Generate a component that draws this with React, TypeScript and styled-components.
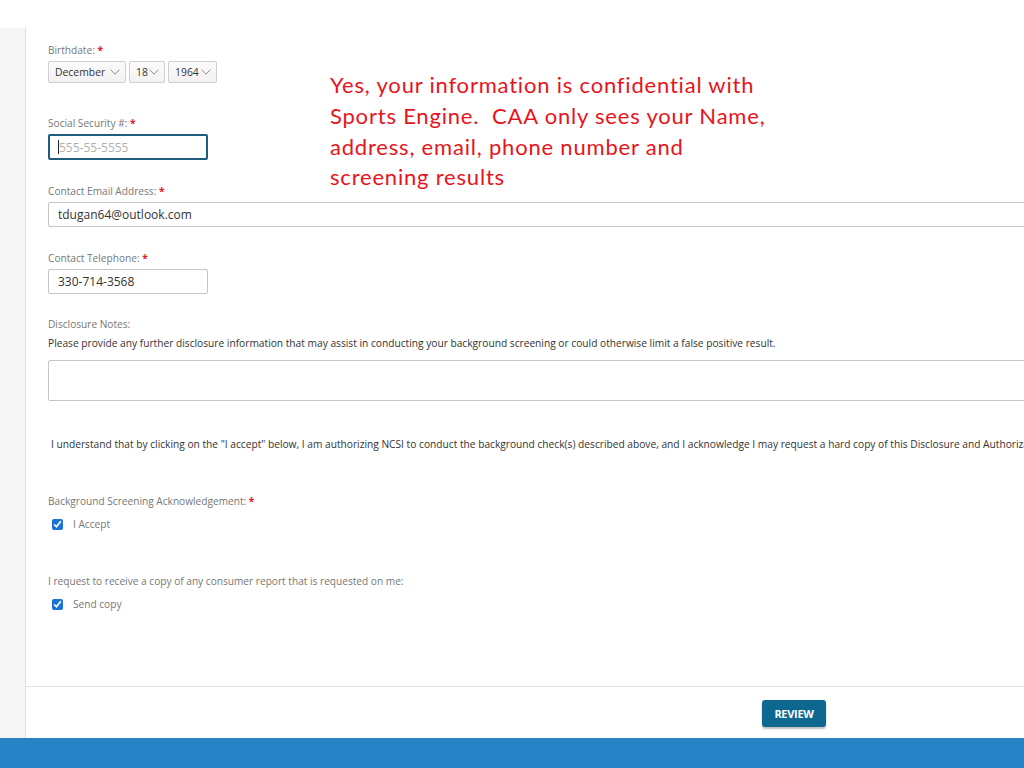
import styled, { createGlobalStyle } from "styled-components";

const GlobalStyle = createGlobalStyle`
  html, body {
    margin: 0;
    padding: 0;
    background: #fff;
    overflow: hidden;
  }
  body {
    font-family: "Open Sans", "Liberation Sans", sans-serif;
  }
`;

const dateParts = [
  { label: "December", width: 78 },
  { label: "18", width: 36 },
  { label: "1964", width: 49 },
];

const Chevron = () => (
  <svg width="10" height="6" viewBox="0 0 10 6" fill="none">
    <polyline points="0.5,0.6 5,5.2 9.5,0.6" stroke="#8c8c8c" strokeWidth="1" />
  </svg>
);

const App: React.FC = () => {
  return (
    <Page>
      <GlobalStyle />
      <TopStrip />
      <Middle>
        <Sidebar />
        <Main>
          <Form>
            <Field>
              <Label>
                Birthdate: <Req>*</Req>
              </Label>
              <SelectRow>
                {dateParts.map((d) => (
                  <SelectBox key={d.label} $width={d.width}>
                    <span>{d.label}</span>
                    <Chevron />
                  </SelectBox>
                ))}
              </SelectRow>
            </Field>

            <Field $top={33}>
              <Label>
                Social Security #: <Req>*</Req>
              </Label>
              <FocusWrap>
                <TextInput $width={160} $focused placeholder="555-55-5555" readOnly />
                <Caret />
              </FocusWrap>
            </Field>

            <Field $top={24}>
              <Label>
                Contact Email Address: <Req>*</Req>
              </Label>
              <TextInput value="tdugan64@outlook.com" readOnly />
            </Field>

            <Field $top={24}>
              <Label>
                Contact Telephone: <Req>*</Req>
              </Label>
              <TextInput $width={160} value="330-714-3568" readOnly />
            </Field>

            <Field $top={23}>
              <Label>Disclosure Notes:</Label>
              <Paragraph>
                Please provide any further disclosure information that may assist in conducting your background
                screening or could otherwise limit a false positive result.
              </Paragraph>
              <NotesArea readOnly />
            </Field>

            <Agreement>
              I understand that by clicking on the "I accept" below, I am authorizing NCSI to conduct the background
              check(s) described above, and I acknowledge I may request a hard copy of this Disclosure and
              Authorization form.
            </Agreement>

            <Field $top={43}>
              <Label>
                Background Screening Acknowledgement: <Req>*</Req>
              </Label>
              <CheckRow>
                <Check type="checkbox" checked readOnly />
                <CheckText>I Accept</CheckText>
              </CheckRow>
            </Field>

            <Field $top={43}>
              <Label>I request to receive a copy of any consumer report that is requested on me:</Label>
              <CheckRow>
                <Check type="checkbox" checked readOnly />
                <CheckText>Send copy</CheckText>
              </CheckRow>
            </Field>
          </Form>

          <ButtonBar>
            <ReviewButton>REVIEW</ReviewButton>
          </ButtonBar>
        </Main>
      </Middle>
      <Footer />

      <Note>
        Yes, your information is confidential with
        <br />
        Sports Engine.&nbsp; CAA only sees your Name,
        <br />
        address, email, phone number and
        <br />
        screening results
      </Note>
    </Page>
  );
};

const Page = styled.div`
  position: relative;
  width: 1024px;
  height: 768px;
  display: flex;
  flex-direction: column;
  overflow: hidden;
`;

const TopStrip = styled.div`
  height: 28px;
  flex-shrink: 0;
  background: #fff;
`;

const Middle = styled.div`
  flex: 1;
  display: flex;
  min-height: 0;
`;

const Sidebar = styled.div`
  width: 25px;
  flex-shrink: 0;
  background: #f6f6f6;
  border-right: 1px solid #dedede;
`;

const Main = styled.div`
  flex-shrink: 0;
  width: 1536px;
  display: flex;
  flex-direction: column;
`;

const Form = styled.div`
  flex: 1;
  padding: 15px 0 0 22px;
  display: flex;
  flex-direction: column;
`;

const Field = styled.div<{ $top?: number }>`
  display: flex;
  flex-direction: column;
  align-items: flex-start;
  margin-top: ${(p) => p.$top ?? 0}px;
`;

const Label = styled.div`
  font-size: 10.15px;
  line-height: 14px;
  color: #777;
  margin-bottom: 4px;
  white-space: nowrap;
`;

const Req = styled.span`
  color: #e0202a;
  font-weight: 700;
`;

const SelectRow = styled.div`
  display: flex;
  gap: 3px;
`;

const SelectBox = styled.div<{ $width: number }>`
  box-sizing: border-box;
  width: ${(p) => p.$width}px;
  height: 22px;
  padding: 0 5px 0 6px;
  display: flex;
  align-items: center;
  justify-content: space-between;
  font-size: 10.4px;
  color: #333;
  background: linear-gradient(#fbfbfb, #f2f2f2);
  border: 1px solid #cfcfcf;
  border-radius: 2px;
`;

const FocusWrap = styled.div`
  position: relative;
`;

const Caret = styled.span`
  position: absolute;
  left: 10px;
  top: 6px;
  width: 1px;
  height: 14px;
  background: #222;
`;

const TextInput = styled.input<{ $width?: number; $focused?: boolean }>`
  box-sizing: border-box;
  width: ${(p) => (p.$width ? `${p.$width}px` : "1460px")};
  height: ${(p) => (p.$focused ? 26 : 25)}px;
  padding: 0 9px;
  font-family: "Open Sans", "Liberation Sans", sans-serif;
  font-size: 12px;
  color: #333;
  background: #fff;
  border: ${(p) => (p.$focused ? "2px solid #1f5d7c" : "1px solid #c4c4c4")};
  border-radius: 2px;
  outline: none;

  &::placeholder {
    color: #b0b0b0;
  }
`;

const Paragraph = styled.div`
  font-size: 10.2px;
  line-height: 14px;
  color: #333;
  white-space: nowrap;
  margin-top: 1px;
`;

const NotesArea = styled.textarea`
  box-sizing: border-box;
  width: 1460px;
  height: 41px;
  margin-top: 10px;
  border: 1px solid #c4c4c4;
  border-radius: 2px;
  resize: none;
  outline: none;
`;

const Agreement = styled(Paragraph)`
  margin: 36px 0 0 3px;
`;

const CheckRow = styled.div`
  display: flex;
  align-items: center;
  gap: 10px;
  margin-top: 5px;
  padding-left: 4px;
`;

const Check = styled.input`
  width: 11px;
  height: 11px;
  margin: 0;
  accent-color: #1a73d9;
`;

const CheckText = styled.span`
  font-size: 10.15px;
  line-height: 14px;
  color: #777;
`;

const ButtonBar = styled.div`
  height: 52px;
  flex-shrink: 0;
  border-top: 1px solid #e0e0e0;
  display: flex;
  align-items: flex-start;
  justify-content: center;
  padding-top: 13px;
  box-sizing: border-box;
`;

const ReviewButton = styled.button`
  width: 64px;
  height: 27px;
  background: #0d6890;
  color: #fff;
  border: none;
  border-radius: 3px;
  box-shadow: 0 2px 2px rgba(0, 0, 0, 0.25);
  font-family: "Open Sans", "Liberation Sans", sans-serif;
  font-size: 11px;
  font-weight: 700;
  letter-spacing: -0.3px;
  padding: 0;
`;

const Footer = styled.div`
  height: 30px;
  flex-shrink: 0;
  background: #2883c6;
`;

const Note = styled.div`
  position: absolute;
  left: 330px;
  top: 70px;
  font-family: Lato, "Liberation Sans", sans-serif;
  font-size: 22px;
  letter-spacing: 0.8px;
  line-height: 30.8px;
  color: #e8141b;
  white-space: nowrap;
`;

export default App;
